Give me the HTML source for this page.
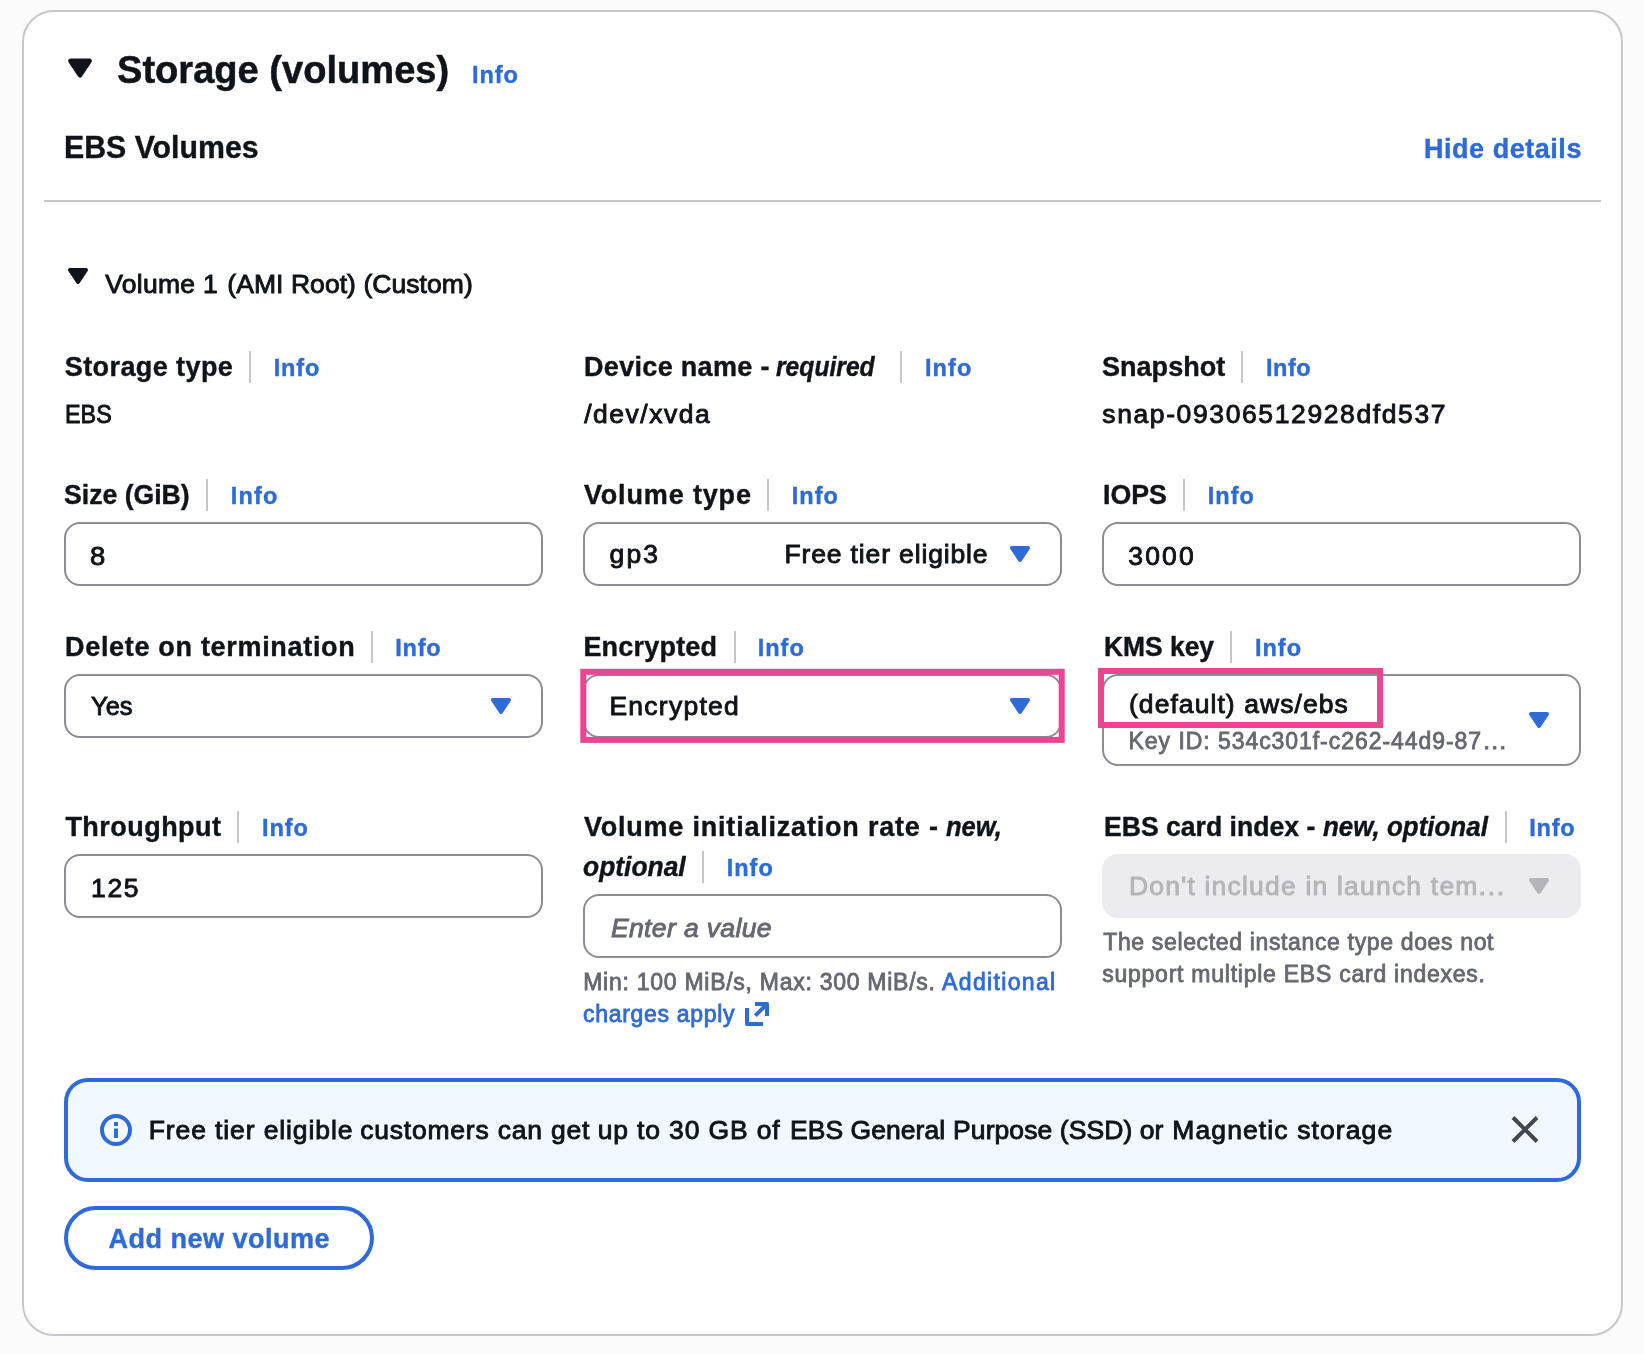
<!DOCTYPE html>
<html lang="en"><head><meta charset="utf-8"><title>Storage (volumes)</title>
<style>
html,body{margin:0;padding:0}
body{width:1644px;height:1354px;position:relative;overflow:hidden;background:#fbfbfb;font-family:"Liberation Sans",sans-serif;color:#0f141a}
.t{position:absolute;white-space:nowrap;display:block;transform-origin:0 0;margin:0;padding:0;text-decoration:none;cursor:default}
.txt{position:absolute;left:0;top:0;width:1644px;height:1354px;will-change:transform}
.a{position:absolute;box-sizing:border-box}
.card{left:22px;top:10px;width:1601px;height:1326px;background:#fff;border:2px solid #c6c6cd;border-radius:32px}
.hr{left:44px;top:200px;width:1557px;height:2px;background:#c6c6cd}
.dv{width:2px;height:32px;background:#c6c6cd}
.in{width:479px;height:64px;border:2px solid #8c8c94;border-radius:16px;background:#fff}
.dis{background:#ebebf0;border-color:#ebebf0}
.pink{border:6px solid #ea4590}
.alert{left:64px;top:1078px;width:1517px;height:104px;border:4px solid #2e6ad8;border-radius:24px;background:#f1f9fe}
.btn{left:64px;top:1206px;width:310px;height:64px;border:4px solid #2e6ad8;border-radius:32px;background:#fff}
svg.a{overflow:visible}

</style></head>
<body>
<div class="a card"></div>
<div class="a hr"></div>
<!-- header carets -->
<svg class="a" style="left:61px;top:49px" width="38" height="38" viewBox="0 0 16 16"><path d="M4 5h8l-4 6z" fill="#0f141a" stroke="#0f141a" stroke-width="2" stroke-linejoin="round"/></svg>
<svg class="a" style="left:62px;top:260px" width="32" height="32" viewBox="0 0 16 16"><path d="M4 5h8l-4 6z" fill="#0f141a" stroke="#0f141a" stroke-width="2" stroke-linejoin="round"/></svg>
<!-- label dividers -->
<div class="a dv" style="left:249px;top:351px"></div>
<div class="a dv" style="left:900px;top:351px"></div>
<div class="a dv" style="left:1241px;top:351px"></div>
<div class="a dv" style="left:206px;top:479px"></div>
<div class="a dv" style="left:767px;top:479px"></div>
<div class="a dv" style="left:1183px;top:479px"></div>
<div class="a dv" style="left:371px;top:631px"></div>
<div class="a dv" style="left:734px;top:631px"></div>
<div class="a dv" style="left:1230px;top:631px"></div>
<div class="a dv" style="left:237px;top:811px"></div>
<div class="a dv" style="left:702px;top:851px"></div>
<div class="a dv" style="left:1505px;top:811px"></div>
<!-- inputs -->
<div class="a in" style="left:64px;top:522px"></div>
<div class="a in" style="left:583px;top:522px"></div>
<div class="a in" style="left:1102px;top:522px"></div>
<div class="a in" style="left:64px;top:674px"></div>
<div class="a in" style="left:583px;top:674px"></div>
<div class="a in" style="left:1102px;top:674px;height:92px"></div>
<div class="a in" style="left:64px;top:854px"></div>
<div class="a in" style="left:583px;top:894px"></div>
<div class="a in dis" style="left:1102px;top:854px"></div>
<!-- carets -->
<svg class="a" style="left:1004px;top:538px" width="32" height="32" viewBox="0 0 16 16"><path d="M4 5h8l-4 6z" fill="#2e6ad8" stroke="#2e6ad8" stroke-width="2" stroke-linejoin="round"/></svg>
<svg class="a" style="left:485px;top:690px" width="32" height="32" viewBox="0 0 16 16"><path d="M4 5h8l-4 6z" fill="#2e6ad8" stroke="#2e6ad8" stroke-width="2" stroke-linejoin="round"/></svg>
<svg class="a" style="left:1004px;top:690px" width="32" height="32" viewBox="0 0 16 16"><path d="M4 5h8l-4 6z" fill="#2e6ad8" stroke="#2e6ad8" stroke-width="2" stroke-linejoin="round"/></svg>
<svg class="a" style="left:1523px;top:704px" width="32" height="32" viewBox="0 0 16 16"><path d="M4 5h8l-4 6z" fill="#2e6ad8" stroke="#2e6ad8" stroke-width="2" stroke-linejoin="round"/></svg>
<svg class="a" style="left:1523px;top:870px" width="32" height="32" viewBox="0 0 16 16"><path d="M4 5h8l-4 6z" fill="#b4b4bb" stroke="#b4b4bb" stroke-width="2" stroke-linejoin="round"/></svg>
<!-- alert -->
<div class="a alert"></div>
<svg class="a" style="left:100px;top:1114px" width="32" height="32" viewBox="0 0 16 16" fill="none" stroke="#2e6ad8" stroke-width="2"><circle cx="8" cy="8" r="7"/><path d="M8 7.25V12M8 4v2"/></svg>
<!-- button -->
<div class="a btn"></div>
<!-- overlay: external-link icon, close icon, highlight rectangles -->
<svg class="a" style="left:0;top:0" width="1644" height="1354" viewBox="0 0 1644 1354" fill="none">
<g stroke="#2e6ad8" stroke-width="4" stroke-linejoin="round"><path d="M747 1008V1024H763"/><path d="M755 1004H767V1016"/><path d="M767 1004L755.3 1015.7"/></g>
<path d="M1513 1117.5l24 24M1537 1117.5l-24 24" stroke="#424650" stroke-width="4"/>
<rect x="583.3" y="671.8" width="478.4" height="68.1" stroke="#eb4491" stroke-width="6"/>
<rect x="1101" y="671" width="279" height="54" stroke="#eb4491" stroke-width="6"/>
</svg>

<div class="txt">
<h2 class="t" style="left:117.17px;top:50px;font-size:39px;line-height:39px;font-weight:700;-webkit-text-stroke:0.50px;transform:scaleX(0.9763);">Storage (volumes)</h2>
<a class="t" style="left:471.90px;top:64px;font-size:23.5px;line-height:23.5px;font-weight:700;color:#2e6ad8;letter-spacing:0.994px;-webkit-text-stroke:0.40px;">Info</a>
<h3 class="t" style="left:64.14px;top:132px;font-size:31px;line-height:31px;font-weight:700;-webkit-text-stroke:0.40px;transform:scaleX(0.9765);">EBS Volumes</h3>
<a class="t" style="left:1424.00px;top:136px;font-size:27px;line-height:27px;font-weight:700;color:#2e6ad8;letter-spacing:0.534px;-webkit-text-stroke:0.40px;">Hide details</a>
<span class="t" style="left:105.25px;top:271px;font-size:26.5px;line-height:26.5px;letter-spacing:0.294px;-webkit-text-stroke:0.90px;">Volume 1</span>
<span class="t" style="left:227.35px;top:271px;font-size:26.5px;line-height:26.5px;letter-spacing:0.055px;-webkit-text-stroke:0.90px;">(AMI Root) (Custom)</span>
<label class="t" style="left:64.76px;top:354px;font-size:27px;line-height:27px;font-weight:700;letter-spacing:0.413px;-webkit-text-stroke:0.40px;">Storage type</label>
<a class="t" style="left:273.70px;top:357px;font-size:23.5px;line-height:23.5px;font-weight:700;color:#2e6ad8;letter-spacing:0.864px;-webkit-text-stroke:0.40px;">Info</a>
<span class="t" style="left:65.13px;top:401px;font-size:26.5px;line-height:26.5px;-webkit-text-stroke:0.90px;transform:scaleX(0.8819);">EBS</span>
<label class="t" style="left:584.00px;top:354px;font-size:27px;line-height:27px;font-weight:700;letter-spacing:0.317px;-webkit-text-stroke:0.40px;">Device name -</label>
<i class="t" style="left:776.38px;top:354px;font-size:27px;line-height:27px;font-weight:700;font-style:italic;-webkit-text-stroke:0.40px;transform:scaleX(0.9134);">required</i>
<a class="t" style="left:925.00px;top:357px;font-size:23.5px;line-height:23.5px;font-weight:700;color:#2e6ad8;letter-spacing:1.057px;-webkit-text-stroke:0.40px;">Info</a>
<span class="t" style="left:584.15px;top:401px;font-size:26.5px;line-height:26.5px;letter-spacing:1.526px;-webkit-text-stroke:0.90px;">/dev/xvda</span>
<label class="t" style="left:1102.04px;top:354px;font-size:27px;line-height:27px;font-weight:700;-webkit-text-stroke:0.40px;transform:scaleX(1.0018);">Snapshot</label>
<a class="t" style="left:1265.94px;top:357px;font-size:23.5px;line-height:23.5px;font-weight:700;color:#2e6ad8;letter-spacing:0.564px;-webkit-text-stroke:0.40px;">Info</a>
<span class="t" style="left:1102.29px;top:401px;font-size:26.5px;line-height:26.5px;letter-spacing:1.609px;-webkit-text-stroke:0.90px;">snap-09306512928dfd537</span>
<label class="t" style="left:64.12px;top:482px;font-size:27px;line-height:27px;font-weight:700;-webkit-text-stroke:0.40px;transform:scaleX(0.9856);">Size (GiB)</label>
<a class="t" style="left:230.80px;top:485px;font-size:23.5px;line-height:23.5px;font-weight:700;color:#2e6ad8;letter-spacing:1.184px;-webkit-text-stroke:0.40px;">Info</a>
<span class="t" style="left:90.17px;top:543px;font-size:26.5px;line-height:26.5px;-webkit-text-stroke:0.90px;transform:scaleX(1.0360);">8</span>
<label class="t" style="left:583.90px;top:482px;font-size:27px;line-height:27px;font-weight:700;letter-spacing:0.855px;-webkit-text-stroke:0.40px;">Volume type</label>
<a class="t" style="left:791.80px;top:485px;font-size:23.5px;line-height:23.5px;font-weight:700;color:#2e6ad8;letter-spacing:0.994px;-webkit-text-stroke:0.40px;">Info</a>
<span class="t" style="left:609.55px;top:541px;font-size:26.5px;line-height:26.5px;letter-spacing:2.167px;-webkit-text-stroke:0.90px;">gp3</span>
<span class="t" style="left:784.45px;top:541px;font-size:26.5px;line-height:26.5px;letter-spacing:0.859px;-webkit-text-stroke:0.90px;">Free tier eligible</span>
<label class="t" style="left:1102.91px;top:482px;font-size:27px;line-height:27px;font-weight:700;-webkit-text-stroke:0.40px;transform:scaleX(0.9903);">IOPS</label>
<a class="t" style="left:1207.80px;top:485px;font-size:23.5px;line-height:23.5px;font-weight:700;color:#2e6ad8;letter-spacing:0.994px;-webkit-text-stroke:0.40px;">Info</a>
<span class="t" style="left:1128.35px;top:543px;font-size:26.5px;line-height:26.5px;letter-spacing:2.129px;-webkit-text-stroke:0.90px;">3000</span>
<label class="t" style="left:65.00px;top:634px;font-size:27px;line-height:27px;font-weight:700;letter-spacing:0.688px;-webkit-text-stroke:0.40px;">Delete on termination</label>
<a class="t" style="left:395.30px;top:637px;font-size:23.5px;line-height:23.5px;font-weight:700;color:#2e6ad8;letter-spacing:0.764px;-webkit-text-stroke:0.40px;">Info</a>
<span class="t" style="left:91.42px;top:693px;font-size:26.5px;line-height:26.5px;-webkit-text-stroke:0.90px;transform:scaleX(0.9598);">Yes</span>
<label class="t" style="left:583.40px;top:634px;font-size:27px;line-height:27px;font-weight:700;letter-spacing:0.207px;-webkit-text-stroke:0.40px;">Encrypted</label>
<a class="t" style="left:757.76px;top:637px;font-size:23.5px;line-height:23.5px;font-weight:700;color:#2e6ad8;letter-spacing:0.994px;-webkit-text-stroke:0.40px;">Info</a>
<span class="t" style="left:609.45px;top:693px;font-size:26.5px;line-height:26.5px;letter-spacing:1.249px;-webkit-text-stroke:0.90px;">Encrypted</span>
<label class="t" style="left:1103.62px;top:634px;font-size:27px;line-height:27px;font-weight:700;-webkit-text-stroke:0.40px;transform:scaleX(0.9774);">KMS key</label>
<a class="t" style="left:1255.00px;top:637px;font-size:23.5px;line-height:23.5px;font-weight:700;color:#2e6ad8;letter-spacing:0.994px;-webkit-text-stroke:0.40px;">Info</a>
<span class="t" style="left:1128.95px;top:691px;font-size:26.5px;line-height:26.5px;letter-spacing:1.067px;-webkit-text-stroke:0.90px;">(default) aws/ebs</span>
<span class="t" style="left:1128.58px;top:730px;font-size:23px;line-height:23px;color:#656871;letter-spacing:0.944px;-webkit-text-stroke:0.80px;">Key ID: 534c301f-c262-44d9-87</span>
<span class="t" style="left:1481.94px;top:730px;font-size:23px;line-height:23px;color:#656871;-webkit-text-stroke:0.80px;transform:scaleX(1.1011);">…</span>
<label class="t" style="left:65.40px;top:814px;font-size:27px;line-height:27px;font-weight:700;letter-spacing:0.461px;-webkit-text-stroke:0.40px;">Throughput</label>
<a class="t" style="left:262.10px;top:817px;font-size:23.5px;line-height:23.5px;font-weight:700;color:#2e6ad8;letter-spacing:0.864px;-webkit-text-stroke:0.40px;">Info</a>
<span class="t" style="left:91.05px;top:875px;font-size:26.5px;line-height:26.5px;letter-spacing:1.612px;-webkit-text-stroke:0.90px;">125</span>
<label class="t" style="left:583.90px;top:814px;font-size:27px;line-height:27px;font-weight:700;letter-spacing:0.794px;-webkit-text-stroke:0.40px;">Volume initialization rate -</label>
<i class="t" style="left:945.79px;top:814px;font-size:27px;line-height:27px;font-weight:700;font-style:italic;-webkit-text-stroke:0.40px;transform:scaleX(0.9463);">new,</i>
<i class="t" style="left:582.85px;top:854px;font-size:27px;line-height:27px;font-weight:700;font-style:italic;-webkit-text-stroke:0.40px;transform:scaleX(0.9779);">optional</i>
<a class="t" style="left:726.70px;top:857px;font-size:23.5px;line-height:23.5px;font-weight:700;color:#2e6ad8;letter-spacing:0.994px;-webkit-text-stroke:0.40px;">Info</a>
<span class="t" style="left:610.95px;top:915px;font-size:26.5px;line-height:26.5px;font-style:italic;color:#656871;letter-spacing:0.374px;-webkit-text-stroke:0.90px;">Enter a value</span>
<span class="t" style="left:583.24px;top:971px;font-size:23px;line-height:23px;color:#656871;letter-spacing:0.729px;-webkit-text-stroke:0.80px;">Min: 100 MiB/s, Max: 300 MiB/s.</span>
<a class="t" style="left:942.10px;top:971px;font-size:23px;line-height:23px;color:#2e6ad8;letter-spacing:1.334px;-webkit-text-stroke:0.80px;font-weight:400;">Additional</a>
<a class="t" style="left:583.06px;top:1003px;font-size:23px;line-height:23px;color:#2e6ad8;letter-spacing:0.688px;-webkit-text-stroke:0.80px;font-weight:400;">charges apply</a>
<label class="t" style="left:1103.61px;top:814px;font-size:27px;line-height:27px;font-weight:700;-webkit-text-stroke:0.40px;transform:scaleX(0.9846);">EBS card index -</label>
<i class="t" style="left:1322.89px;top:814px;font-size:27px;line-height:27px;font-weight:700;font-style:italic;-webkit-text-stroke:0.40px;transform:scaleX(0.9612);">new, optional</i>
<a class="t" style="left:1529.30px;top:817px;font-size:23.5px;line-height:23.5px;font-weight:700;color:#2e6ad8;letter-spacing:0.764px;-webkit-text-stroke:0.40px;">Info</a>
<span class="t" style="left:1128.95px;top:873px;font-size:26.5px;line-height:26.5px;color:#b4b4bb;letter-spacing:1.196px;-webkit-text-stroke:0.90px;">Don't include in launch tem</span>
<span class="t" style="left:1476.93px;top:873px;font-size:26.5px;line-height:26.5px;color:#b4b4bb;-webkit-text-stroke:0.90px;transform:scaleX(1.0861);">…</span>
<span class="t" style="left:1103.20px;top:931px;font-size:23px;line-height:23px;color:#656871;letter-spacing:0.649px;-webkit-text-stroke:0.80px;">The selected instance type does not</span>
<span class="t" style="left:1102.24px;top:963px;font-size:23px;line-height:23px;color:#656871;letter-spacing:0.752px;-webkit-text-stroke:0.80px;">support multiple EBS card indexes.</span>
<span class="t" style="left:148.75px;top:1117px;font-size:26.5px;line-height:26.5px;letter-spacing:0.889px;-webkit-text-stroke:0.90px;">Free tier eligible</span>
<span class="t" style="left:360.15px;top:1117px;font-size:26.5px;line-height:26.5px;letter-spacing:0.791px;-webkit-text-stroke:0.90px;">customers can get</span>
<span class="t" style="left:597.63px;top:1117px;font-size:26.5px;line-height:26.5px;letter-spacing:0.853px;-webkit-text-stroke:0.90px;">up to 30 GB of</span>
<span class="t" style="left:790.05px;top:1117px;font-size:26.5px;line-height:26.5px;letter-spacing:0.041px;-webkit-text-stroke:0.90px;">EBS General</span>
<span class="t" style="left:953.05px;top:1117px;font-size:26.5px;line-height:26.5px;letter-spacing:0.084px;-webkit-text-stroke:0.90px;">Purpose (SSD) or</span>
<span class="t" style="left:1172.25px;top:1117px;font-size:26.5px;line-height:26.5px;letter-spacing:1.110px;-webkit-text-stroke:0.90px;">Magnetic storage</span>
<span class="t" style="left:108.42px;top:1226px;font-size:27px;line-height:27px;font-weight:700;color:#2e6ad8;letter-spacing:0.499px;-webkit-text-stroke:0.40px;">Add new volume</span>
</div>
</body></html>
